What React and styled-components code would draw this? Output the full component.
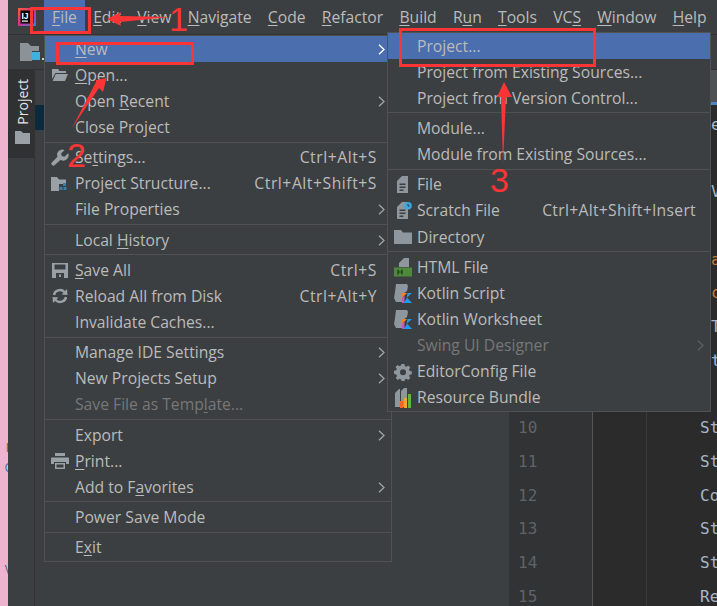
import styled, { createGlobalStyle } from 'styled-components'

const GlobalStyle = createGlobalStyle`
  html, body {
    margin: 0;
    padding: 0;
    background: #3c3f41;
  }
  * {
    box-sizing: border-box;
  }
`

const UI_FONT = `"Open Sans", "Noto Sans", sans-serif`
const CODE_FONT = `"DejaVu Sans Mono", monospace`

// "_x" marks the mnemonic letter
const Label = ({ text }) => {
  const i = text.indexOf('_')
  if (i < 0) return text
  return (
    <>
      {text.slice(0, i)}
      <Mnemonic>{text[i + 1]}</Mnemonic>
      {text.slice(i + 2)}
    </>
  )
}

const IconFolderOpen = () => (
  <svg width='18' height='16' viewBox='0 0 18 16'>
    <path fill='#9aa1a6' d='M1 2h6l1.500 2H15v2H4.500L1 12z' />
    <path fill='#9aa1a6' d='M4.800 7H17l-3 7H1.600z' />
  </svg>
)
const IconWrench = () => (
  <svg width='18' height='18' viewBox='0 0 16 16'>
    <path fill='#9aa1a6' d='M15.200 3.800 12 6.800 9.600 6.200 9 3.900 12 .9A4.600 4.600 0 0 0 5.800 6.900L.9 11.800a1.700 1.700 0 0 0 2.500 2.500L8.600 9.600A4.600 4.600 0 0 0 15.200 3.800Z' />
  </svg>
)
const IconStructure = () => (
  <svg width='20' height='18' viewBox='0 0 20 18'>
    <path fill='#9aa1a6' d='M1 2h6l2 2.500h7V9H9v7H1z' />
    <path fill='#3d7ea6' d='M13 8h3v3h-3zM9.500 12h3v3h-3zM13.500 12h3v3h-3z' />
  </svg>
)
const IconSave = () => (
  <svg width='16' height='16' viewBox='0 0 16 16'>
    <path fill='#9aa1a6' fillRule='evenodd' d='M0 1h16v15H0zM2.500 2.500v5h11v-5zM4 11v5h8v-5z' />
    <path fill='#9aa1a6' d='M7 12.500h2V15H7z' />
  </svg>
)
const IconReload = () => (
  <svg width='16' height='16' viewBox='0 0 16 16' fill='none'>
    <path stroke='#9aa1a6' strokeWidth='2.400' d='M2 7a6 5.600 0 0 1 10.500-3M14 9a6 5.600 0 0 1-10.500 3' />
    <path fill='#9aa1a6' d='M9.500 6.500 15.500 7 15 1zM6.500 9.500.5 9l.5 6z' />
  </svg>
)
const IconPrint = () => (
  <svg width='18' height='16' viewBox='0 0 18 16'>
    <path fill='#9aa1a6' d='M4 0h10v3H4zM1 4.500h16a1 1 0 0 1 1 1V11h-3V9H3v2H0V5.500a1 1 0 0 1 1-1z' />
    <path fill='#9aa1a6' fillRule='evenodd' d='M4 10h10v6H4zM5.500 11.500V14.500h7v-3z' />
  </svg>
)
const IconFile = ({ badge }) => (
  <svg width='18' height='18' viewBox='0 0 18 18'>
    <path fill='#8d979d' d='M3 5 8 0h6v17H3z' />
    <path fill='#3c3f41' d='M5.500 7.500h6V9h-6zM5.500 10.500h6V12h-6zM5.500 13.500h4V15h-4z' />
    {badge && <circle cx='14' cy='3.800' r='3.800' fill='#3ea6dd' />}
    {badge && <path stroke='#1d3f55' fill='none' d='M14 1.800v2.200h1.500' />}
  </svg>
)
const IconDirectory = () => (
  <svg width='18' height='16' viewBox='0 0 18 16'>
    <path fill='#8d979d' d='M0 1h7l2 2.500h9V15H0z' />
  </svg>
)
const IconHtml = () => (
  <svg width='20' height='20' viewBox='0 0 20 20'>
    <path fill='#8d979d' d='M6 6l5-5h5v9H6z' />
    <path fill='#4f8a3c' d='M1 10.500h18v9H1z' />
    <path stroke='#173a12' strokeWidth='1.200' fill='none' d='M5 12.500v5M9 12.500v5M5 15h4' />
  </svg>
)
const IconKotlin = () => (
  <svg width='20' height='20' viewBox='0 0 20 20'>
    <path fill='#8d979d' d='M3 1h11l1 2-1 5-4 3v8H3L1 15l1-6z' />
    <path fill='#f58220' d='M9 10h5l-5 5z' />
    <path fill='#c757bc' d='M9 15l2.500-2.500V20H9z' />
    <path fill='#1d9bf0' d='M14.500 10H19l-5 4.500 5 5.500h-8.500l3-4z' />
  </svg>
)
const IconGear = () => (
  <svg width='18' height='18' viewBox='0 0 18 18'>
    <path fill='#8d979d' fillRule='evenodd' d='M7.500 1h3l.4 2.200 1.400.6 1.900-1.300 2.100 2.100-1.300 1.900.6 1.400 2.200.4v3l-2.200.4-.6 1.400 1.300 1.900-2.100 2.100-1.900-1.300-1.400.6-.4 2.200h-3l-.4-2.200-1.400-.6-1.900 1.300-2.100-2.100 1.300-1.900-.6-1.400L0 10.700v-3l2.200-.4.600-1.400L1.500 4l2.100-2.100 1.900 1.300 1.400-.6zM9 6.200a3 3 0 1 0 0 6 3 3 0 0 0 0-6z' />
  </svg>
)
const IconBundle = () => (
  <svg width='20' height='20' viewBox='0 0 20 20'>
    <path fill='#8d979d' d='M2 5l4-4h1v18H2zM8 3l3-3h3v10h-3v9H8z' />
    <path fill='#f26522' d='M7 13h3v7H7z' />
    <path fill='#f0a732' d='M11 10h3v10h-3z' />
    <path fill='#62b543' d='M15 6h3v14h-3z' />
  </svg>
)

const fileMenu = [
  { text: '_New', active: true, arrow: true },
  { text: '_Open...', icon: <IconFolderOpen /> },
  { text: 'Open _Recent', arrow: true },
  { text: 'Close Project' },
  'sep',
  { text: 'Se_ttings...', icon: <IconWrench />, keys: 'Ctrl+Alt+S' },
  { text: 'Project Structure...', icon: <IconStructure />, keys: 'Ctrl+Alt+Shift+S' },
  { text: 'File Properties', arrow: true },
  'sep',
  { text: 'Local _History', arrow: true },
  'sep',
  { text: '_Save All', icon: <IconSave />, keys: 'Ctrl+S' },
  { text: 'Reload All from Disk', icon: <IconReload />, keys: 'Ctrl+Alt+Y' },
  { text: 'Invalidate Caches...' },
  'sep',
  { text: 'Manage IDE Settings', arrow: true },
  { text: 'New Projects Setup', arrow: true },
  { text: 'Save File as Temp_late...', disabled: true },
  'sep',
  { text: 'Export', arrow: true },
  { text: '_Print...', icon: <IconPrint /> },
  { text: 'Add to F_avorites', arrow: true },
  'sep',
  { text: 'Power Save Mode' },
  'sep',
  { text: 'E_xit' },
]

const newMenu = [
  { text: 'Project...', active: true },
  { text: 'Project from Existing Sources...' },
  { text: 'Project from Version Control...' },
  'sep',
  { text: 'Module...' },
  { text: 'Module from Existing Sources...' },
  'sep',
  { text: 'File', icon: <IconFile /> },
  { text: 'Scratch File', icon: <IconFile badge />, keys: 'Ctrl+Alt+Shift+Insert', tightKeys: true },
  { text: 'Directory', icon: <IconDirectory /> },
  'sep',
  { text: 'HTML File', icon: <IconHtml /> },
  { text: 'Kotlin Script', icon: <IconKotlin /> },
  { text: 'Kotlin Worksheet', icon: <IconKotlin /> },
  { text: 'Swing UI Designer', disabled: true, arrow: true },
  { text: 'EditorConfig File', icon: <IconGear /> },
  { text: 'Resource Bundle', icon: <IconBundle /> },
]

const menuBar = ['_File', '_Edit', '_View', '_Navigate', '_Code', '_Refactor', '_Build', 'R_un', '_Tools', 'VC_S', '_Window', '_Help']

const codeLines = [
  { n: 1, text: 'e', indent: 64 },
  { n: 2 },
  { n: 3, text: 'V', indent: 64 },
  { n: 4 },
  { n: 5, text: 'a', indent: 64, accent: true },
  { n: 6, text: 'c', indent: 64, accent: true },
  { n: 7, text: 'T', indent: 64 },
  { n: 8, text: 't', indent: 64 },
  { n: 9 },
  { n: 10, text: 'String', indent: 53 },
  { n: 11, text: 'String', indent: 53 },
  { n: 12, text: 'Config', indent: 53 },
  { n: 13, text: 'String', indent: 53 },
  { n: 14, text: 'String', indent: 53 },
  { n: 15, text: 'Result', indent: 53 },
]

const Menu = ({ items, $left, $top, $width, $slot }) => (
  <MenuPanel $left={$left} $top={$top} $width={$width}>
    {items.map((item, i) =>
      item === 'sep' ? (
        <MenuSeparator key={i} />
      ) : (
        <MenuRow key={i} $active={item.active} $disabled={item.disabled}>
          <IconSlot $slot={$slot}>{item.icon}</IconSlot>
          <RowLabel>
            <Label text={item.text} />
          </RowLabel>
          {item.keys && <Shortcut $tight={item.tightKeys}>{item.keys}</Shortcut>}
          <ArrowSlot>
            {item.arrow && (
              <svg width='7' height='11' viewBox='0 0 7 11' fill='none'>
                <path
                  d='M1 .7 6 5.500 1 10.300'
                  stroke={item.active ? '#fff' : item.disabled ? '#5c5f61' : '#a0a4a7'}
                  strokeWidth='1.300'
                />
              </svg>
            )}
          </ArrowSlot>
        </MenuRow>
      )
    )}
  </MenuPanel>
)

export default function App() {
  return (
    <>
      <GlobalStyle />
      <Page>
        <DesktopStrip>
          <DesktopMark $color='#8a5a2b' $top={441} $bleed={1}>I</DesktopMark>
          <DesktopMark $color='#3b6ea5' $top={6} $bleed={4}>C</DesktopMark>
          <DesktopMark $color='#3b5f8a' $top={88} $bleed={4}>V</DesktopMark>
        </DesktopStrip>
        <IdeWindow>
          <MenuBar>
            <LogoSlot>
              <svg width='18' height='18' viewBox='0 0 18 18'>
                <defs>
                  <linearGradient id='ij' x1='0' y1='0' x2='1' y2='1'>
                    <stop offset='0' stopColor='#fc5d3c' />
                    <stop offset='.5' stopColor='#d62f8f' />
                    <stop offset='1' stopColor='#2f80ed' />
                  </linearGradient>
                </defs>
                <rect width='18' height='18' fill='url(#ij)' />
                <rect x='2.500' y='2.500' width='13' height='13' fill='#000' />
                <text x='3.500' y='10.500' fontSize='8.500' fontWeight='700' fontFamily='Liberation Sans' fill='#fff'>IJ</text>
                <rect x='4' y='12.500' width='6' height='1.200' fill='#fff' />
              </svg>
            </LogoSlot>
            {menuBar.map((name, i) => (
              <MenuBarItem key={name} $active={i === 0}>
                <Label text={name} />
              </MenuBarItem>
            ))}
          </MenuBar>
          <NavBar>
            <svg width='24' height='20' viewBox='0 0 24 20'>
              <path fill='#8b9298' d='M0 1h8l3 3h8v5h-7v10H0z' />
              <path fill='#3fb1dc' d='M12 10h8v8h-8z' />
              <path fill='#c8ccce' d='M22 16h2v2h-2z' />
            </svg>
          </NavBar>
          <Workspace>
            <ToolStripe>
              <ProjectTab>
                <VerticalLabel>Project</VerticalLabel>
                <svg width='15' height='13' viewBox='0 0 15 13'>
                  <path fill='#9aa1a6' d='M0 0h6l2 2h7v11H0z' />
                </svg>
              </ProjectTab>
            </ToolStripe>
            <ProjectPanel>
              <SelectedNode />
            </ProjectPanel>
            <EditorPane>
              <TabBar>
                <ActiveTab />
              </TabBar>
              <CodeArea>
                {codeLines.map((line) => (
                  <CodeLine key={line.n}>
                    <LineNumber>{line.n}</LineNumber>
                    <FoldColumn />
                    <CodeText $indent={line.indent} $accent={line.accent}>{line.text}</CodeText>
                  </CodeLine>
                ))}
              </CodeArea>
            </EditorPane>
          </Workspace>
        </IdeWindow>

        <Menu items={fileMenu} $left={44} $top={35} $width={348} $slot={30} />
        <Menu items={newMenu} $left={387} $top={32} $width={324} $slot={29} />

        <RedBox $x={30} $y={7} $w={61} $h={27} />
        <RedBox $x={56} $y={42} $w={138} $h={23} />
        <RedBox $x={399} $y={28} $w={197} $h={39} />
        <Callout $x={169} $y={-1}>1</Callout>
        <Callout $x={67} $y={135}>2</Callout>
        <Callout $x={490} $y={160}>3</Callout>
        <ArrowLayer viewBox='0 0 717 606'>
          <polygon points='107,19 121,12 120,16 170,17 120,22 121,26' />
          <polygon points='106.500,78 103,92 99,88 72,128 96,82 96,80' />
          <polygon points='504,82 512,97 506,97 503,163 501,97 497,97' />
        </ArrowLayer>
      </Page>
    </>
  )
}

const Page = styled.div`
  position: relative;
  display: flex;
  width: 717px;
  height: 606px;
  overflow: hidden;
  font-family: ${UI_FONT};
  font-size: 15.7px;
  color: #bbbbbb;
`

const DesktopStrip = styled.div`
  flex: 0 0 8px;
  display: flex;
  flex-direction: column;
  align-items: flex-end;
  overflow: hidden;
  background: #eeb4cf;
`

const DesktopMark = styled.span`
  margin-top: ${({ $top }) => $top}px;
  margin-right: -${({ $bleed }) => $bleed}px;
  font-size: 12px;
  line-height: 14px;
  color: ${({ $color }) => $color};
`

const IdeWindow = styled.div`
  flex: 1;
  min-width: 0;
  display: flex;
  flex-direction: column;
  background: #3c3f41;
`

const MenuBar = styled.div`
  flex: 0 0 35px;
  display: flex;
  align-items: stretch;
  border-bottom: 1px solid #323232;
`

const LogoSlot = styled.div`
  flex: 0 0 36px;
  display: flex;
  align-items: center;
  padding-left: 10px;
  padding-bottom: 1px;
`

const MenuBarItem = styled.div`
  display: flex;
  align-items: center;
  padding: 0 8.1px;
  background: ${({ $active }) => ($active ? '#4b6eaf' : 'transparent')};
  white-space: pre;
`

const Mnemonic = styled.u`
  text-underline-offset: 2px;
  text-decoration-thickness: 1px;
`

const NavBar = styled.div`
  flex: 0 0 35px;
  display: flex;
  align-items: center;
  padding-left: 12px;
  border-bottom: 1px solid #323232;
`

const Workspace = styled.div`
  flex: 1;
  min-height: 0;
  display: flex;
`

const ToolStripe = styled.div`
  flex: 0 0 27px;
  border-right: 1px solid #323232;
`

const ProjectTab = styled.div`
  height: 88px;
  display: flex;
  flex-direction: column;
  align-items: center;
  gap: 6px;
  padding: 9px 0 0 3px;
  background: #2f3133;
`

const VerticalLabel = styled.span`
  writing-mode: vertical-rl;
  transform: rotate(180deg);
  font-size: 14px;
  line-height: 16px;
  color: #e4e4e4;
`

const ProjectPanel = styled.div`
  flex: 0 0 474px;
  padding-top: 35px;
`

const SelectedNode = styled.div`
  height: 25px;
  background: #0d293e;
`

const EditorPane = styled.div`
  flex: 1;
  min-width: 0;
  display: flex;
  flex-direction: column;
`

const TabBar = styled.div`
  flex: 0 0 35px;
  display: flex;
  flex-direction: column;
  justify-content: flex-end;
`

const ActiveTab = styled.div`
  height: 35px;
  background: #4e5254;
  border-bottom: 3px solid #4a88c7;
`

const CodeArea = styled.div`
  flex: 1;
  padding-top: 3px;
  background: #2b2b2b;
  overflow: hidden;
`

const CodeLine = styled.div`
  display: grid;
  grid-template-columns: 84px 54px 1fr;
  height: 33.7px;
  font-family: ${CODE_FONT};
  font-size: 16px;
  line-height: 33.7px;
`

const LineNumber = styled.div`
  padding-left: 9px;
  background: #313335;
  border-right: 1px solid #555555;
  color: #606366;
`

const FoldColumn = styled.div`
  border-right: 1px solid #3a3a3a;
`

const CodeText = styled.div`
  padding-left: ${({ $indent }) => $indent}px;
  white-space: pre;
  overflow: hidden;
  color: ${({ $accent }) => ($accent ? '#cc7832' : '#a9b7c6')};
`

const MenuPanel = styled.div`
  position: absolute;
  left: ${({ $left }) => $left}px;
  top: ${({ $top }) => $top}px;
  width: ${({ $width }) => $width}px;
  border: 1px solid #515151;
  background: #3c3f41;
`

const MenuRow = styled.div`
  display: flex;
  align-items: center;
  height: 26.15px;
  white-space: pre;
  background: ${({ $active }) => ($active ? '#4b6eaf' : 'transparent')};
  color: ${({ $disabled }) => ($disabled ? '#777777' : '#bbbbbb')};
`

const IconSlot = styled.div`
  flex: 0 0 ${({ $slot }) => $slot}px;
  display: flex;
  align-items: center;
  justify-content: center;
`

const RowLabel = styled.span`
  flex: 1;
  padding-bottom: 1px;
`

const Shortcut = styled.span`
  padding-bottom: 1px;
  letter-spacing: ${({ $tight }) => ($tight ? '0.3px' : '0.55px')};
`

const ArrowSlot = styled.div`
  flex: 0 0 14px;
  display: flex;
  align-items: center;
  padding-left: 1px;
`

const MenuSeparator = styled.div`
  height: 4px;
  padding-top: 1px;

  &::after {
    content: '';
    display: block;
    height: 1px;
    background: #515151;
  }
`

const RedBox = styled.div`
  position: absolute;
  left: ${({ $x }) => $x}px;
  top: ${({ $y }) => $y}px;
  width: ${({ $w }) => $w}px;
  height: ${({ $h }) => $h}px;
  border: 3px solid #fb3535;
`

const Callout = styled.span`
  position: absolute;
  left: ${({ $x }) => $x}px;
  top: ${({ $y }) => $y}px;
  font-family: "Liberation Sans", sans-serif;
  font-size: 34px;
  line-height: 40px;
  color: #fb3535;
`

const ArrowLayer = styled.svg`
  position: absolute;
  inset: 0;
  width: 717px;
  height: 606px;
  fill: #fb3535;
  pointer-events: none;
`
